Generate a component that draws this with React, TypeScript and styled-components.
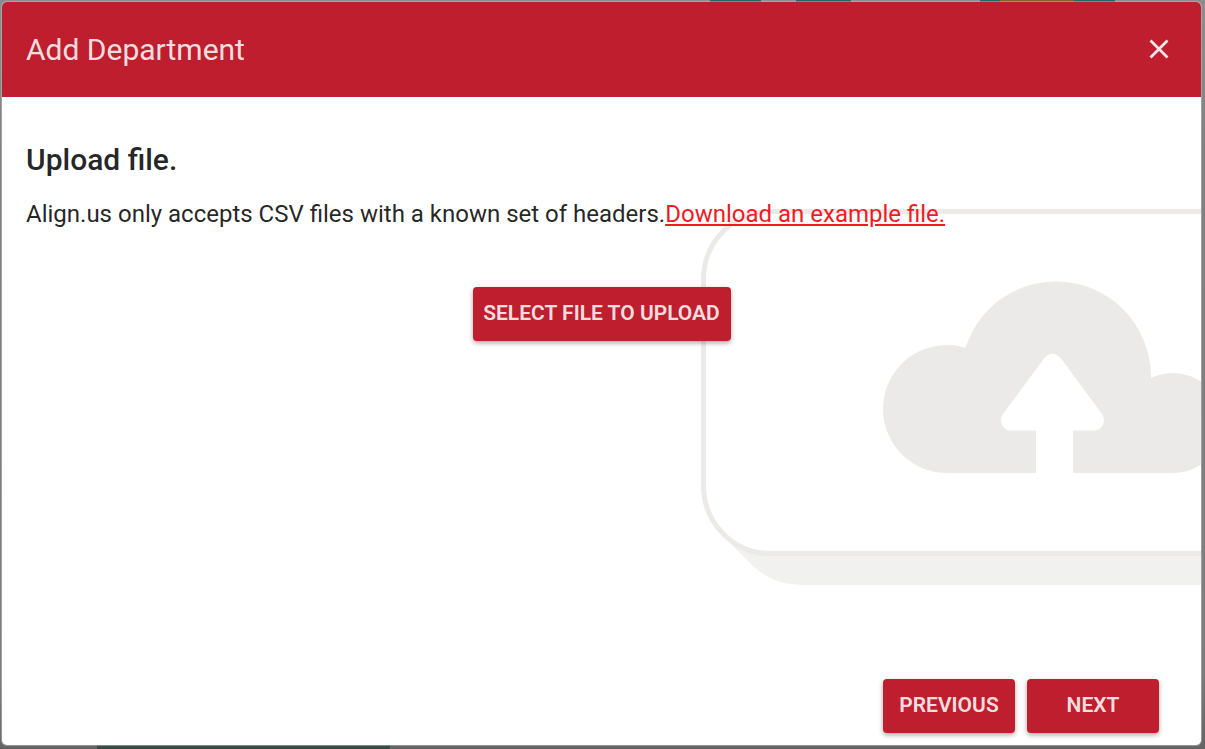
import React from "react";
import styled, { createGlobalStyle } from "styled-components";

const GlobalStyle = createGlobalStyle`
  *, *::before, *::after { box-sizing: border-box; }
  body {
    margin: 0;
    font-family: Roboto, "Liberation Sans", sans-serif;
    color: rgba(0, 0, 0, 0.87);
  }
`;

const Scrim = styled.div`
  display: flex;
  min-height: 100vh;
  padding: 2px 4px 4px 2px;
  background:
    linear-gradient(#17635d, #17635d) 710px 0 / 51px 2px no-repeat,
    linear-gradient(#17635d, #17635d) 796px 0 / 55px 2px no-repeat,
    linear-gradient(#8a5a1c, #8a5a1c) 1000px 0 / 74px 2px no-repeat,
    linear-gradient(#17635d, #17635d) 980px 0 / 135px 2px no-repeat,
    linear-gradient(#344a43, #344a43) 97px 100% / 293px 4px no-repeat,
    linear-gradient(#8c8c8c, #808080 20%, #7c7c7c 90%, #636363);
`;

const Dialog = styled.section`
  display: flex;
  flex: 1;
  flex-direction: column;
  overflow: hidden;
  border-radius: 5px;
  background: #fff;
  box-shadow: 0 0 1px 1px rgba(190, 190, 190, 0.6);
`;

const Header = styled.header`
  display: flex;
  align-items: center;
  justify-content: space-between;
  height: 95px;
  padding: 0 24px 2px;
  background: #be1e2d;
  color: rgba(255, 255, 255, 0.87);
`;

const Title = styled.h1`
  margin: 0;
  padding-top: 2px;
  font-size: 30px;
  font-weight: 400;
  line-height: 42px;
`;

const CloseButton = styled.button`
  display: flex;
  align-items: center;
  justify-content: center;
  width: 36px;
  height: 36px;
  padding: 0;
  border: 0;
  background: none;
  color: rgba(255, 255, 255, 0.9);
  cursor: pointer;
`;

const Body = styled.div`
  position: relative;
  display: flex;
  flex: 1;
  flex-direction: column;
  padding: 40px 24px 12px;
`;

const Illustration = styled.svg`
  position: absolute;
  top: 103px;
  right: 0;
  width: 501px;
  height: 390px;
`;

const Content = styled.div`
  position: relative;
  display: flex;
  flex: 1;
  flex-direction: column;
`;

const Heading = styled.h2`
  margin: 0;
  font-size: 30px;
  font-weight: 500;
  line-height: 46px;
`;

const Text = styled.p`
  margin: 13px 0 0;
  font-size: 24px;
  font-weight: 400;
  line-height: 36px;
`;

const Link = styled.a`
  color: #ed1c24;
  text-decoration: underline;
`;

const Actions = styled.div<{ $align: "center" | "end" }>`
  display: flex;
  gap: 12px;
  justify-content: ${(p) => p.$align};
  margin-top: ${(p) => (p.$align === "end" ? "auto" : "55px")};
  padding-right: ${(p) => (p.$align === "end" ? "18px" : "0")};
`;

const Button = styled.button<{ $wide?: boolean }>`
  width: ${(p) => (p.$wide ? "258px" : "132px")};
  height: 54px;
  padding: 0 0 2px;
  border: 0;
  border-radius: 4px;
  background: #be1e2d;
  color: rgba(255, 255, 255, 0.87);
  font-family: inherit;
  font-size: 21px;
  font-weight: 600;
  line-height: 32px;
  white-space: nowrap;
  text-transform: uppercase;
  box-shadow: 0 2px 5px rgba(0, 0, 0, 0.35);
  cursor: pointer;
`;

function UploadIllustration() {
  return (
    <Illustration viewBox="700 200 501 390" aria-hidden="true">
      <path d="M722 535 L752 565 Q772 585 802 585 H1201 V550 H760 Z" fill="#f1f1ef" />
      <path
        d="M1210 211.500H770A66.500 68 0 0 0 703.500 279.500V485.500A66.500 68 0 0 0 770 553.500H1210"
        fill="#fff"
        stroke="#ebeae8"
        strokeWidth="5"
      />
      <g fill="#ebeae8">
        <circle cx="947" cy="409" r="64" />
        <circle cx="1056" cy="376.500" r="95" />
        <circle cx="1173" cy="423" r="50" />
        <path d="M947 400H1173V473H947Z" />
      </g>
      <path
        d="M1044 358.500Q1052.500 349 1061 358.500L1102 414C1107 422 1102 430.500 1094 430.500H1073V474H1036V430.500H1011C1003 430.500 998 422 1003 414Z"
        fill="#fff"
      />
    </Illustration>
  );
}

export default function App() {
  return (
    <>
      <GlobalStyle />
      <Scrim>
        <Dialog role="dialog" aria-labelledby="dialog-title">
          <Header>
            <Title id="dialog-title">Add Department</Title>
            <CloseButton type="button" aria-label="Close">
              <svg width="36" height="36" viewBox="0 0 36 36" fill="none" stroke="currentColor" strokeWidth="2.700">
                <path d="M9.500 9.500 26.500 26.500M26.500 9.500 9.500 26.500" />
              </svg>
            </CloseButton>
          </Header>
          <Body>
            <UploadIllustration />
            <Content>
              <Heading>Upload file.</Heading>
              <Text>
                Align.us only accepts CSV files with a known set of headers.
                <Link href="#example">Download an example file.</Link>
              </Text>
              <Actions $align="center">
                <Button type="button" $wide>Select file to upload</Button>
              </Actions>
              <Actions $align="end">
                <Button type="button">Previous</Button>
                <Button type="button">Next</Button>
              </Actions>
            </Content>
          </Body>
        </Dialog>
      </Scrim>
    </>
  );
}
